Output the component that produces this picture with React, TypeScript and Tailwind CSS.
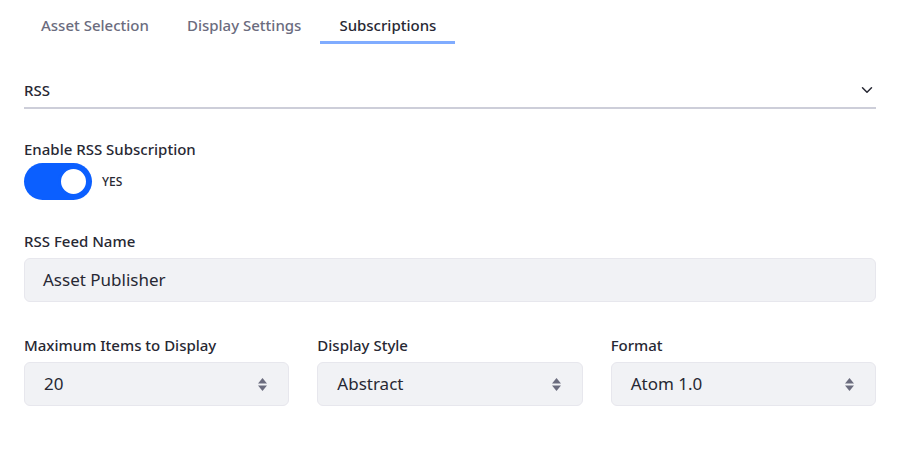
import { ChevronDown } from "lucide-react";

const tabs = ["Asset Selection", "Display Settings", "Subscriptions"];

function SelectArrows() {
  return (
    <svg width="9" height="15" viewBox="0 0 9 15" className="shrink-0">
      <path d="M4.5 1 L9 6.5 H0 Z" fill="#6b6c7e" />
      <path d="M4.5 14 L9 8.5 H0 Z" fill="#6b6c7e" />
    </svg>
  );
}

function SelectField({ label, value }: { label: string; value: string }) {
  return (
    <div className="flex flex-col">
      <label className="mb-[7px] text-[15px] font-medium leading-[20px] text-[#272833]">
        {label}
      </label>
      <div className="flex h-[44px] items-center justify-between rounded-[6px] border border-[#e7e7ed] bg-[#f1f2f5] pl-[19px] pr-[21px]">
        <span className="text-[17px] text-[#272833]">{value}</span>
        <SelectArrows />
      </div>
    </div>
  );
}

export default function App() {
  return (
    <div
      className="h-[457px] w-[900px] bg-white text-[#272833]"
      style={{ fontFamily: '"Noto Sans", "Open Sans", sans-serif' }}
    >
      {/* Tabs */}
      <div className="flex pl-[22px] pt-[13px]">
        {tabs.map((t) => {
          const active = t === "Subscriptions";
          return (
            <div
              key={t}
              className={
                active
                  ? "border-b-[3px] border-[#80acff] px-[19px] pb-[4px] text-[15px] font-medium leading-[24px] text-[#272833]"
                  : "border-b-[3px] border-transparent px-[19px] pb-[4px] text-[15px] font-medium leading-[24px] text-[#6b6c7e]"
              }
            >
              {t}
            </div>
          );
        })}
      </div>

      <div className="px-[24px]">
        {/* Panel header */}
        <div className="mt-[34px] flex items-center justify-between border-b-2 border-[#cdced9] pb-[5px]">
          <span className="text-[15px] font-medium leading-[24px]">RSS</span>
          <ChevronDown size={18} strokeWidth={2} className="text-[#272833]" />
        </div>

        {/* Toggle */}
        <div className="mt-[30px] text-[15px] font-medium leading-[20px]">
          Enable RSS Subscription
        </div>
        <div className="mt-[4px] flex items-center">
          <div className="flex h-[37px] w-[68px] items-center justify-end rounded-full bg-[#0b5fff] pr-[3px]">
            <div className="h-[31px] w-[31px] rounded-full border-[3px] border-[#0b5fff] bg-white" />
          </div>
          <span className="ml-[10px] text-[12px] font-medium text-[#272833]">YES</span>
        </div>

        {/* Feed name */}
        <div className="mt-[31px] text-[15px] font-medium leading-[20px]">RSS Feed Name</div>
        <div className="mt-[7px] flex h-[44px] items-center rounded-[6px] border border-[#e7e7ed] bg-[#f1f2f5] pl-[18px]">
          <span className="text-[17px]">Asset Publisher</span>
        </div>

        {/* Selects */}
        <div className="mt-[33px] grid grid-cols-3 gap-[28px]">
          <SelectField label="Maximum Items to Display" value="20" />
          <SelectField label="Display Style" value="Abstract" />
          <SelectField label="Format" value="Atom 1.0" />
        </div>
      </div>
    </div>
  );
}
